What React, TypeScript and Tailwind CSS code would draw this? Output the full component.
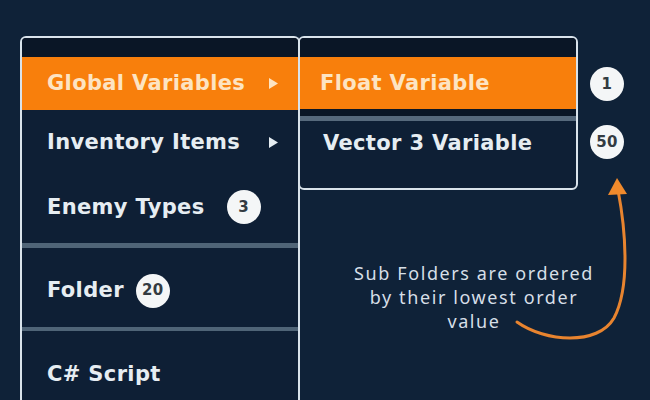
import React from "react";

function Tri() {
  return (
    <svg width="9" height="11" viewBox="0 0 9 11" className="block">
      <polygon points="0,0 9,5.5 0,11" fill="currentColor" />
    </svg>
  );
}

function Badge({ n, extra = "" }: { n: string; extra?: string }) {
  return (
    <div
      className={
        "w-[34px] h-[34px] rounded-full bg-[#f4f6f7] text-[#333b42] flex items-center justify-center text-[15px] font-bold shrink-0 " +
        extra
      }
    >
      {n}
    </div>
  );
}

export default function App() {
  return (
    <div className="relative w-[650px] h-[400px] overflow-hidden bg-[#0f2238] font-['DejaVu_Sans',sans-serif] font-bold text-[21px] tracking-[0.35px] leading-none text-[#e6edf2]">
      <div className="flex items-start pl-[20px] pt-[36px]">
        {/* Left menu */}
        <div className="w-[280px] h-[380px] shrink-0 rounded-t-[6px] border-2 border-b-0 border-[#d9e3eb] bg-[#0e1f35] flex flex-col overflow-hidden">
          <div className="h-[19px] bg-[#0a1626] shrink-0" />
          <div className="h-[53px] shrink-0 bg-[#f87f0c] text-[#fde4c2] flex items-center justify-between pl-[25px] pr-[20px]">
            <span>Global Variables</span>
            <Tri />
          </div>
          <div className="h-[65px] shrink-0 flex items-center justify-between pl-[25px] pr-[20px]">
            <span>Inventory Items</span>
            <Tri />
          </div>
          <div className="h-[68px] shrink-0 flex items-center pl-[25px] pb-[4px]">
            <span>Enemy Types</span>
            <Badge n="3" extra="ml-[22px]" />
          </div>
          <div className="h-[5px] shrink-0 bg-[#4f6477]" />
          <div className="h-[79px] shrink-0 flex items-center pl-[25px] pt-[6px]">
            <span>Folder</span>
            <Badge n="20" extra="ml-[12px]" />
          </div>
          <div className="h-[4px] shrink-0 bg-[#4f6477]" />
          <div className="h-[86px] shrink-0 flex items-center pl-[25px]">
            <span>C# Script</span>
          </div>
        </div>

        {/* Sub menu */}
        <div className="w-[280px] shrink-0 -ml-[2px] rounded-[6px] border-2 border-[#d9e3eb] bg-[#0e1f35] flex flex-col overflow-hidden">
          <div className="h-[19px] bg-[#0a1626] shrink-0" />
          <div className="h-[52px] shrink-0 bg-[#f87f0c] text-[#fde4c2] flex items-center pl-[20px]">
            <span>Float Variable</span>
          </div>
          <div className="h-[7px] shrink-0 bg-[#0a1626]" />
          <div className="h-[5px] shrink-0 bg-[#56697c]" />
          <div className="h-[67px] shrink-0 flex items-start pl-[23px] pt-[12px]">
            <span>Vector 3 Variable</span>
          </div>
        </div>

        {/* Order badges */}
        <div className="flex flex-col ml-[12px] mt-[31px] gap-[24px]">
          <Badge n="1" />
          <Badge n="50" />
        </div>
      </div>

      {/* Annotation */}
      <div className="absolute left-[324px] top-[261px] w-[300px] text-center font-['Noto_Sans',sans-serif] font-normal text-[18px] tracking-[1.6px] leading-[24px] text-[#d6dfe7]">
        <div>Sub Folders are ordered</div>
        <div>by their lowest order</div>
        <div>value</div>
      </div>

      <svg className="absolute left-0 top-0" width="650" height="400" viewBox="0 0 650 400">
        <path
          d="M517 322 C 545 342, 598 346, 614 318 C 630 288, 626 232, 618 190"
          fill="none"
          stroke="#e8842f"
          strokeWidth="3"
          strokeLinecap="round"
        />
        <polygon points="617,178 608,195 627,194" fill="#f08a2c" />
      </svg>
    </div>
  );
}
